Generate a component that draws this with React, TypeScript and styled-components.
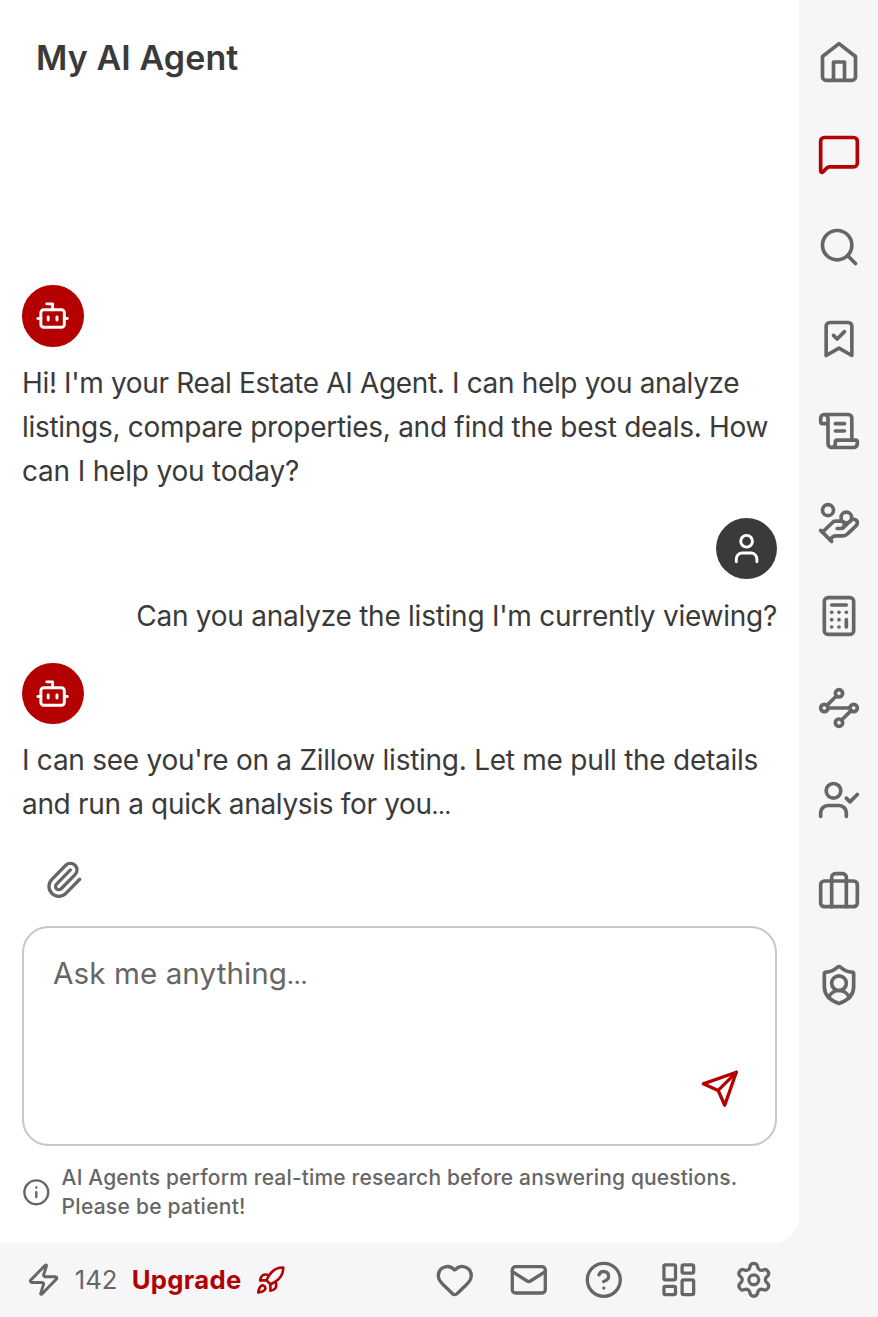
import React from 'react';
import styled, { createGlobalStyle } from 'styled-components';
import {
  BookmarkCheck, Bot, Calculator, CircleHelp, HandCoins, Info, LayoutDashboard,
  Mail, MessageSquare, Paperclip, Rocket, ScrollText, Search, Settings, ShieldUser,
  User, UserCheck, Zap,
} from 'lucide-react';

const red = '#b40000';
const grey = '#666666';
const ink = '#3a3a3a';
const shell = '#f6f6f9';

const GlobalStyle = createGlobalStyle`
  * { box-sizing: border-box; }
  body { margin: 0; background: ${shell}; }
  svg { display: block; flex: none; }
`;

const Page = styled.div`
  width: 878px;
  height: 1317px;
  display: grid;
  grid-template-columns: 799px 79px;
  grid-template-rows: 1243px 74px;
  background: ${shell};
  color: ${ink};
  font-family: Inter, 'Liberation Sans', sans-serif;
`;

const Panel = styled.main`
  display: flex;
  flex-direction: column;
  background: #fff;
  border-bottom-right-radius: 26.4px;
  padding: 0 22px;
`;

const Title = styled.h1`
  margin: 0;
  padding: 36px 14px 0;
  height: 285.2px;
  font-size: 34px;
  line-height: 44px;
  font-weight: 600;
  letter-spacing: 0.1px;
`;

const Chat = styled.section`
  display: flex;
  flex-direction: column;
  gap: 26.2px;
  height: 541px;
`;

const Message = styled.article<{ $mine?: boolean }>`
  display: flex;
  flex-direction: column;
  gap: 14.4px;
  align-items: ${(p) => (p.$mine ? 'flex-end' : 'flex-start')};
`;

const Avatar = styled.div<{ $mine?: boolean }>`
  width: 61.5px;
  height: 61.5px;
  border-radius: 50%;
  display: flex;
  align-items: center;
  justify-content: center;
  color: #fff;
  background: ${(p) => (p.$mine ? ink : red)};
`;

const Text = styled.p`
  margin: 0 0 -1.4px;
  font-size: 28px;
  line-height: 44px;
`;

const Line = styled.span<{ $track?: number }>`
  display: block;
  white-space: nowrap;
  letter-spacing: ${(p) => p.$track ?? 0}px;
`;

const Ellipsis = styled.span`
  letter-spacing: 0;
  font-size: 0.72em;
  font-weight: 600;
`;

const Attach = styled.div`
  display: flex;
  align-items: center;
  padding-left: 22px;
  height: 107.6px;
  color: ${grey};
  flex: none;
`;

const Composer = styled.div`
  display: flex;
  justify-content: space-between;
  flex: none;
  width: 755px;
  height: 219.5px;
  margin-top: -7.3px;
  padding: 23px 35px 35px 29px;
  border: 2.2px solid #c8c8c8;
  border-radius: 26.4px;
  color: ${grey};
  font-size: 29.6px;
  line-height: 44px;
`;

const SendSlot = styled.div`
  align-self: flex-end;
  color: ${red};
`;

const Notice = styled.div`
  display: flex;
  align-items: center;
  gap: 11px;
  margin-top: 18px;
  color: ${grey};
  font-size: 21px;
  font-weight: 500;
  line-height: 28.6px;
`;

const Rail = styled.nav`
  grid-row: 1 / 3;
  grid-column: 2;
  display: flex;
  flex-direction: column;
  align-items: center;
  gap: 48.25px;
  padding-top: 40.2px;
`;

const RailItem = styled.div<{ $active?: boolean }>`
  color: ${(p) => (p.$active ? red : grey)};
`;

const Footer = styled.footer`
  display: flex;
  align-items: center;
  justify-content: space-between;
  padding: 0 25.9px 0 26px;
  color: ${grey};
`;

const Credits = styled.div`
  display: flex;
  align-items: center;
  font-size: 25.7px;
  line-height: 36px;
`;

const Count = styled.span`
  width: 57px;
  margin-left: 13.5px;
`;

const Upgrade = styled.div`
  display: flex;
  align-items: center;
  justify-content: space-between;
  width: 154px;
  color: ${red};
  font-weight: 700;
`;

const Tools = styled.div`
  display: flex;
  gap: 35.1px;
`;

type GlyphProps = { size: number; children: React.ReactNode };

const Glyph = ({ size, children }: GlyphProps) => (
  <svg width={size} height={size} viewBox="0 0 24 24" fill="none" stroke="currentColor"
    strokeWidth={2} strokeLinecap="round" strokeLinejoin="round">
    {children}
  </svg>
);

const RAIL = 44;
const TOOL = 39.6;

export default function App() {
  return (
    <Page>
      <GlobalStyle />
      <Panel>
        <Title>My AI Agent</Title>
        <Chat>
          <Message>
            <Avatar><Bot size={35.2} /></Avatar>
            <Text>
              <Line $track={-0.35}>Hi! I'm your Real Estate AI Agent. I can help you analyze</Line>
              <Line $track={-0.29}>listings, compare properties, and find the best deals. How</Line>
              <Line $track={-0.19}>can I help you today?</Line>
            </Text>
          </Message>
          <Message $mine>
            <Avatar $mine><User size={35.2} /></Avatar>
            <Text><Line $track={-0.25}>Can you analyze the listing I'm currently viewing?</Line></Text>
          </Message>
          <Message>
            <Avatar><Bot size={35.2} /></Avatar>
            <Text>
              <Line $track={-0.26}>I can see you're on a Zillow listing. Let me pull the details</Line>
              <Line $track={-0.33}>and run a quick analysis for you<Ellipsis>…</Ellipsis></Line>
            </Text>
          </Message>
        </Chat>
        <Attach><Paperclip size={TOOL} /></Attach>
        <Composer>
          <Line $track={0.08}>Ask me anything<Ellipsis>…</Ellipsis></Line>
          <SendSlot>
            <Glyph size={TOOL}>
              <path d="m22 2-7 20-4-9-9-4Z" />
              <path d="M22 2 11 13" />
            </Glyph>
          </SendSlot>
        </Composer>
        <Notice>
          <Info size={28.6} />
          <div>
            <Line $track={0.16}>AI Agents perform real-time research before answering questions.</Line>
            <Line $track={0.26}>Please be patient!</Line>
          </div>
        </Notice>
      </Panel>
      <Rail>
        <RailItem>
          <Glyph size={RAIL}>
            <path d="m3 9 9-7 9 7v11a2 2 0 0 1-2 2H5a2 2 0 0 1-2-2z" />
            <polyline points="9 22 9 12 15 12 15 22" />
          </Glyph>
        </RailItem>
        <RailItem $active><MessageSquare size={RAIL} /></RailItem>
        <RailItem><Search size={RAIL} /></RailItem>
        <RailItem><BookmarkCheck size={RAIL} /></RailItem>
        <RailItem><ScrollText size={RAIL} /></RailItem>
        <RailItem><HandCoins size={RAIL} /></RailItem>
        <RailItem><Calculator size={RAIL} /></RailItem>
        <RailItem>
          <Glyph size={RAIL}>
            <path d="m10.586 5.414-5.172 5.172" />
            <path d="m18.586 13.414-5.172 5.172" />
            <path d="M6 12h12" />
            <circle cx="12" cy="20" r="2" />
            <circle cx="12" cy="4" r="2" />
            <circle cx="20" cy="12" r="2" />
            <circle cx="4" cy="12" r="2" />
          </Glyph>
        </RailItem>
        <RailItem><UserCheck size={RAIL} /></RailItem>
        <RailItem>
          <Glyph size={RAIL}>
            <path d="M16 20V4a2 2 0 0 0-2-2h-4a2 2 0 0 0-2 2v16" />
            <rect width="20" height="14" x="2" y="6" rx="2" />
          </Glyph>
        </RailItem>
        <RailItem><ShieldUser size={RAIL} /></RailItem>
      </Rail>
      <Footer>
        <Credits>
          <Zap size={35.2} />
          <Count>142</Count>
          <Upgrade>
            <Line $track={0.3}>Upgrade</Line>
            <Rocket size={30.8} />
          </Upgrade>
        </Credits>
        <Tools>
          <Glyph size={TOOL}>
            <path d="M2 9.5a5.5 5.5 0 0 1 9.591-3.676.56.56 0 0 0 .818 0A5.49 5.49 0 0 1 22 9.5c0 2.29-1.5 4-3 5.5l-5.492 5.313a2 2 0 0 1-3 .019L5 15c-1.5-1.5-3-3.2-3-5.5" />
          </Glyph>
          <Mail size={TOOL} />
          <CircleHelp size={TOOL} />
          <LayoutDashboard size={TOOL} />
          <Settings size={TOOL} />
        </Tools>
      </Footer>
    </Page>
  );
}
